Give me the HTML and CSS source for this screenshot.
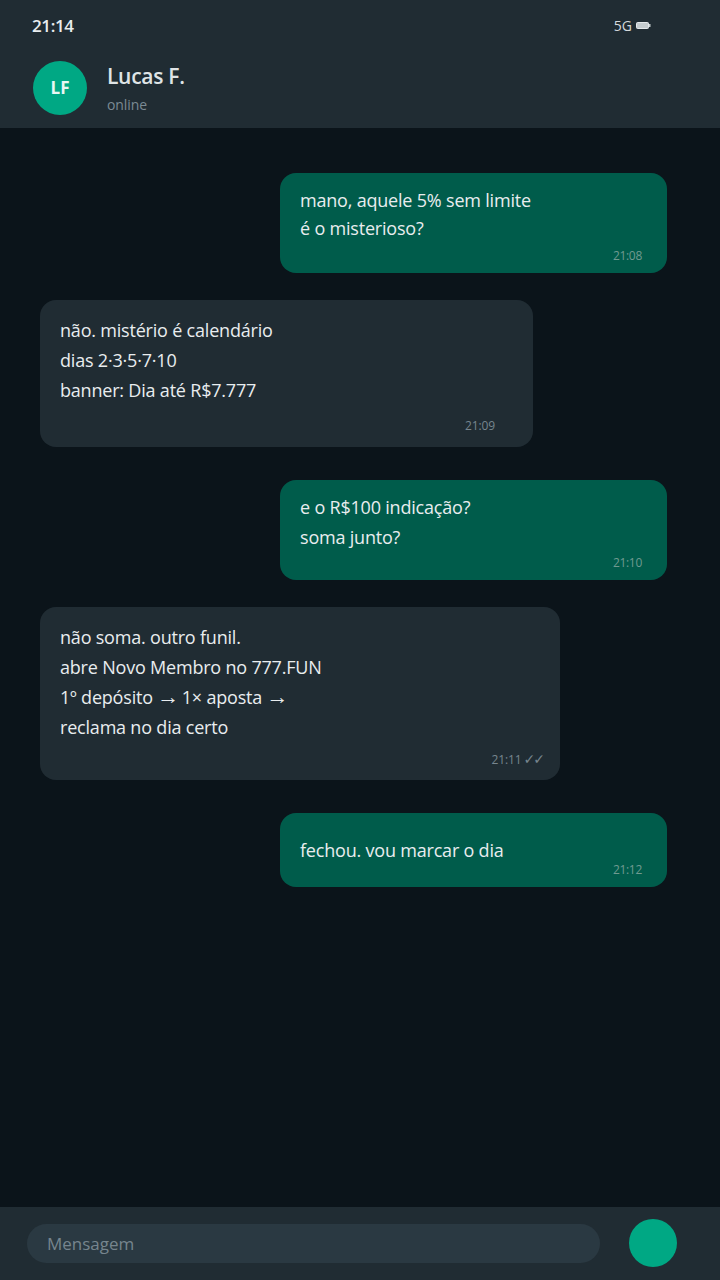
FILE: index.html
```html
<!DOCTYPE html>
<html>
<head>
    <title>Lucas F.</title>
    <link rel="stylesheet" href="styles.css">
</head>
<body>
    <div class="phone">
        <header class="top">
            <div class="status-bar">
                <span class="clock">21:14</span>
                <div class="signal">
                    <span>5G</span>
                    <svg class="battery" width="15" height="7" viewBox="0 0 15 7">
                        <rect x="0.5" y="0.5" width="12" height="6" rx="1" fill="#c4cbce" stroke="#e4e8ea"></rect>
                        <rect x="13" y="2" width="1.5" height="3" fill="#c4cbce"></rect>
                    </svg>
                </div>
            </div>
            <div class="contact">
                <div class="avatar">LF</div>
                <div class="contact-info">
                    <div class="contact-name">Lucas F.</div>
                    <div class="contact-state">online</div>
                </div>
            </div>
        </header>

        <main class="chat">
            <div class="msg msg-out msg-tight">
                <p>mano, aquele 5% sem limite<br>é o misterioso?</p>
                <div class="msg-time">21:08</div>
            </div>
            <div class="msg msg-in msg-wide">
                <p>não. mistério é calendário<br>dias 2·3·5·7·10<br>banner: Dia até R$7.777</p>
                <div class="msg-time msg-time-far">21:09</div>
            </div>
            <div class="msg msg-out">
                <p>e o R$100 indicação?<br>soma junto?</p>
                <div class="msg-time">21:10</div>
            </div>
            <div class="msg msg-in msg-wider">
                <p>não soma. outro funil.<br>abre Novo Membro no 777.FUN<br>1º depósito <span class="arrow">→</span> 1× aposta <span class="arrow">→</span><br>reclama no dia certo</p>
                <div class="msg-time msg-time-ticks">21:11 <span class="ticks">✓✓</span></div>
            </div>
            <div class="msg msg-out msg-short">
                <p>fechou. vou marcar o dia</p>
                <div class="msg-time">21:12</div>
            </div>
        </main>

        <footer class="composer">
            <div class="composer-input">Mensagem</div>
            <div class="send-btn"></div>
        </footer>
    </div>
</body>
</html>
```

FILE: styles.css
```css
* {
    box-sizing: border-box;
}

body {
    margin: 0;
    background-color: #0b141a;
    font-family: "Open Sans", "Noto Sans", sans-serif;
    color: #e9edef;
}

.phone {
    width: 720px;
    height: 1280px;
    display: flex;
    flex-direction: column;
    overflow: hidden;
}

.top {
    height: 128px;
    background-color: #202c33;
    padding: 0 33px;
}

.status-bar {
    height: 51px;
    display: flex;
    justify-content: space-between;
    align-items: center;
}

.clock {
    font-size: 17px;
    font-weight: 600;
    letter-spacing: -0.4px;
    margin-left: -1px;
    color: #e9edef;
}

.signal {
    display: flex;
    align-items: center;
    gap: 4px;
    font-size: 14px;
    color: #d5dadc;
    margin-right: 36px;
}

.battery {
    display: block;
}

.contact {
    display: flex;
    align-items: center;
    gap: 20px;
    margin-top: 10px;
}

.avatar {
    width: 54px;
    height: 54px;
    border-radius: 50%;
    background-color: #00a884;
    color: #e9f7f3;
    display: flex;
    align-items: center;
    justify-content: center;
    font-size: 17px;
    font-weight: 700;
    margin-top: -2px;
}

.contact-name {
    font-size: 21px;
    font-weight: 600;
    line-height: 30px;
    letter-spacing: -0.3px;
    color: #dfe4e6;
}

.contact-state {
    font-size: 14px;
    line-height: 22px;
    margin-top: 3px;
    color: #7b8a93;
    letter-spacing: -0.1px;
}

.chat {
    flex: 1;
    padding: 45px 53px 0 40px;
    display: flex;
    flex-direction: column;
}

.msg {
    border-radius: 16px;
    font-size: 18px;
    letter-spacing: -0.2px;
    padding: 12px 20px 0;
}

.msg p {
    margin: 0;
    line-height: 30px;
}

.arrow {
    font-family: "Liberation Sans", sans-serif;
    font-size: 22px;
    line-height: 1;
    letter-spacing: -2px;
}

.msg-out {
    width: 387px;
    height: 100px;
    align-self: flex-end;
    background-color: #005c4b;
    margin-bottom: 27px;
}

.msg-tight {
    padding-top: 13px;
}

.msg-tight p {
    line-height: 28px;
}

.msg-tight .msg-time {
    margin-top: 6px;
}

.msg-in {
    background-color: #202c33;
    margin-bottom: 33px;
}

.msg-wide {
    width: 493px;
    height: 147px;
    padding-top: 15px;
}

.msg-wider {
    width: 520px;
    height: 173px;
    padding-top: 15px;
}

.msg-short {
    height: 74px;
    padding-top: 22px;
}

.msg-time {
    font-size: 12px;
    line-height: 16px;
    letter-spacing: -0.3px;
    text-align: right;
    color: #6f9a90;
    margin-top: 3px;
    margin-right: 5px;
}

.msg-in .msg-time {
    color: #76858e;
    letter-spacing: -0.1px;
}

.msg-time-far {
    margin-top: 13px;
    margin-right: 18px;
}

.msg-time-ticks {
    margin-top: 9px;
    margin-right: -3px;
}

.ticks {
    font-family: "DejaVu Sans", sans-serif;
    font-size: 14px;
    letter-spacing: -2px;
    margin-left: -1px;
}

.msg-short .msg-time {
    margin-top: -3px;
}

.composer {
    height: 73px;
    background-color: #202c33;
    padding: 17px 43px 0 27px;
    display: flex;
    align-items: flex-start;
    justify-content: space-between;
}

.composer-input {
    width: 573px;
    height: 39px;
    border-radius: 20px;
    background-color: #2a3942;
    color: #76858e;
    font-size: 17px;
    line-height: 40px;
    padding-left: 20px;
}

.send-btn {
    width: 48px;
    height: 48px;
    border-radius: 50%;
    background-color: #00a884;
    margin-top: -5px;
}
```
